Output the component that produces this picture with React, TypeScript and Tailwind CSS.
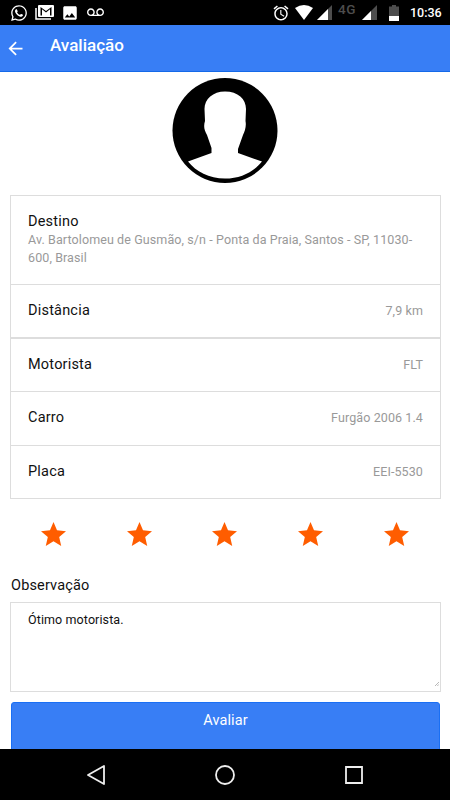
import { useState } from "react";
import { FaWhatsapp } from "react-icons/fa";
import { MdAccessAlarm, MdArrowBack, MdImage, MdVoicemail } from "react-icons/md";

const trip = [
  { label: "Motorista", value: "FLT" },
  { label: "Carro", value: "Furgão 2006 1.4" },
  { label: "Placa", value: "EEI-5530" },
];

function Signal({ level }: { level: number }) {
  return (
    <svg className="w-[15px] h-[15px]" viewBox="0 0 15 15">
      <path d="M0 15L15 0v15z" fill="#4d4d4d" />
      <path d={`M0 15L${level} ${15 - level}V15z`} fill="#fff" />
    </svg>
  );
}

function StatusBar() {
  return (
    <div className="flex h-[25px] shrink-0 items-center bg-black pl-[10px] pr-[8px] text-white">
      <FaWhatsapp className="h-[18px] w-[18px]" />
      <svg className="ml-[7px] h-[15px] w-[19px]" viewBox="0 0 19 15">
        <path d="M1 3v11h15" fill="none" stroke="#fff" strokeWidth="1.5" />
        <path
          fillRule="evenodd"
          d="M4 0h14q1 0 1 1v10q0 1-1 1H4q-1 0-1-1V1q0-1 1-1zM5.500 2v8.500h1.500V4.300l4 3.200 4-3.200v6.200h1.500V2L11 6z"
          fill="#fff"
        />
      </svg>
      <MdImage className="ml-[7px] h-[18px] w-[18px]" />
      <MdVoicemail className="ml-2 h-[17px] w-[17px]" />

      {/* RIGHT SIDE */}
      <div className="ml-auto flex items-center">
        <MdAccessAlarm className="h-[18px] w-[18px]" />
        <svg className="ml-[5px] h-[15px] w-[18px]" viewBox="0 0 18 15">
          <path d="M0 3Q9-3 18 3L9 15z" fill="#fff" />
        </svg>
        <div className="ml-1">
          <Signal level={11} />
        </div>
        <span className="ml-[6px] mb-2 w-[18px] text-[13.5px] leading-3 font-medium tracking-[0.5px] text-[#4d4d4d]">
          4G
        </span>
        <div className="ml-[6px]">
          <Signal level={9} />
        </div>
        <svg className="ml-3 h-4 w-[10px]" viewBox="0 0 10 16">
          <path d="M3 0h4v1.500h3V16H0V1.500h3z" fill="#4d4d4d" />
          <path d="M0 11h10v5H0z" fill="#fff" />
        </svg>
        <span className="ml-[11px] w-8 text-[12.5px] leading-4 font-medium">10:36</span>
      </div>
    </div>
  );
}

function Avatar() {
  return (
    <svg className="mx-auto block h-[106px] w-[106px] shrink-0" viewBox="0 0 106 106">
      <circle cx="53" cy="52.500" r="52.500" fill="#000" />
      <path
        d="M53 13.500C66 13.500 74 21 74 31L73.500 43C74.500 48 73 53 71 57L66 71V75L90 83.500C82 93.500 69 100.500 53 100.500S24 93.500 16 83.500L39.500 75V70L35 57C32 52 31.500 48 33 43L32.500 31C32.500 21 41 13.500 53 13.500z"
        fill="#fff"
      />
    </svg>
  );
}

function Row({ label, value }: { label: string; value: string }) {
  return (
    <div className="flex flex-1 items-center justify-between px-[17px]">
      <span className="text-[14.5px] leading-5 tracking-[0.2px] text-[#111]">{label}</span>
      <span className="text-[12.5px] leading-4 tracking-[0.1px] text-[#999]">{value}</span>
    </div>
  );
}

export default function App() {
  const [rating, setRating] = useState(5);
  const [note, setNote] = useState("Ótimo motorista.");

  return (
    <div className="flex h-[800px] w-[450px] flex-col overflow-hidden bg-white font-[Roboto,sans-serif]">
      <StatusBar />

      {/* HEADER */}
      <header className="flex h-[47px] shrink-0 items-center border-b border-[#1469e8] bg-[#387ef5] text-white">
        <MdArrowBack className="ml-[5px] h-[21px] w-[21px]" />
        <h1 className="mb-[6px] ml-6 text-[17px] leading-5 font-medium">Avaliação</h1>
      </header>

      <main className="flex min-h-0 flex-1 flex-col overflow-hidden px-[10px] pt-[6px]">
        <Avatar />

        {/* TRIP */}
        <section className="mt-[11px] flex h-[304px] w-[431px] shrink-0 flex-col border border-[#ddd]">
          <div className="h-[89px] border-b border-[#ddd] px-[17px] pt-[17px]">
            <div className="text-[14.5px] leading-[18px] tracking-[0.2px] text-[#111]">Destino</div>
            <div className="text-[12.5px] leading-[18px] tracking-[0.1px] text-[#999]">
              Av. Bartolomeu de Gusmão, s/n - Ponta da Praia, Santos - SP, 11030-
              <wbr />
              600, Brasil
            </div>
          </div>
          <div className="flex h-[54px] border-b-2 border-[#ddd]">
            <Row label="Distância" value="7,9 km" />
          </div>
          <div className="flex flex-1 flex-col divide-y divide-[#ddd]">
            {trip.map((item) => (
              <Row key={item.label} label={item.label} value={item.value} />
            ))}
          </div>
        </section>

        {/* STARS */}
        <div className="mt-[23px] ml-[1px] flex w-[428px] shrink-0 justify-around">
          {[1, 2, 3, 4, 5].map((n) => (
            <button key={n} aria-label={`${n}`} onClick={() => setRating(n)}>
              <svg className="block h-6 w-[25px]" viewBox="2 2 20 19" preserveAspectRatio="none">
                <path
                  d="M12 17.270L18.180 21l-1.640-7.030L22 9.240l-7.190-.610L12 2 9.190 8.630 2 9.240l5.460 4.730L5.820 21z"
                  fill={n <= rating ? "#ff5d00" : "#ddd"}
                />
              </svg>
            </button>
          ))}
        </div>

        {/* NOTE */}
        <label htmlFor="note" className="mt-[30px] pl-[1px] text-[14.5px] leading-5 tracking-[0.15px] text-[#111]">
          Observação
        </label>
        <div className="relative mt-[6px] h-[90px] w-[431px] shrink-0">
          <textarea
            id="note"
            className="block h-full w-full resize-none border border-[#ddd] px-[17px] py-2 text-[12.5px] leading-[18px] tracking-[0.1px] text-[#111] outline-none"
            value={note}
            onChange={(e) => setNote(e.target.value)}
          />
          <svg className="absolute right-[2px] bottom-[6px] h-1 w-1" viewBox="0 0 4 4" stroke="#999" strokeWidth="0.7">
            <path d="M0 4L4 0M2.300 4L4 2.300" />
          </svg>
        </div>

        <button className="mt-[10px] ml-[1px] h-[60px] w-[429px] shrink-0 rounded-[3px] border border-[#1a6ff4] bg-[#387ef5] pb-[22px] text-[14.5px] tracking-[0.1px] text-white">
          Avaliar
        </button>
      </main>

      {/* NAVIGATION BAR */}
      <nav className="flex h-[51px] shrink-0 items-center justify-between bg-black px-[86px]">
        <svg className="h-5 w-5" viewBox="0 0 20 20" fill="none" stroke="#eee" strokeWidth="1.800" strokeLinejoin="round">
          <path d="M2 10L18 1v18z" />
        </svg>
        <svg className="h-5 w-5" viewBox="0 0 20 20" fill="none" stroke="#eee" strokeWidth="1.800">
          <circle cx="10" cy="10" r="9" />
        </svg>
        <svg className="h-5 w-5" viewBox="0 0 20 20" fill="none" stroke="#eee" strokeWidth="1.800">
          <path d="M2 2h16v16H2z" />
        </svg>
      </nav>
    </div>
  );
}
